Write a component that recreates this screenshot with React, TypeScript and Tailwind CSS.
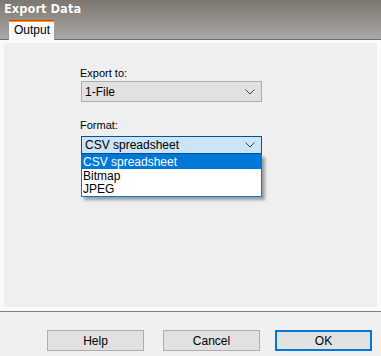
import React from "react";

function Chevron({ color = "#404040" }: { color?: string }) {
  return (
    <svg width="10" height="6" viewBox="0 0 10 6" className="block">
      <path d="M0.5 0.5 L5 5 L9.5 0.5" fill="none" stroke={color} strokeWidth="1" />
    </svg>
  );
}

export default function App() {
  return (
    <div
      className="w-[381px] h-[356px] bg-[#f0f0f0] flex flex-col overflow-hidden"
      style={{ fontFamily: '"Liberation Sans", Arial, sans-serif' }}
    >
      {/* header */}
      <div className="h-[40px] bg-gradient-to-b from-[#7d7770] to-[#aaa8a5] border-b border-[#6e6e6e] flex flex-col relative">
        <div
          className="pl-[4px] pt-[2px] text-[11.5px] font-bold text-white leading-[14px] [text-shadow:0_0_1px_rgba(0,0,0,0.3)]"
          style={{ fontFamily: '"DejaVu Sans", Verdana, sans-serif' }}
        >
          Export Data
        </div>
        <div className="absolute left-[8px] top-[20px] w-[47px] h-[20px] bg-[#f9f9f9] border-x border-[#9a9a9a] flex flex-col">
          <div className="h-[1px] bg-[#e53a00]" />
          <div className="h-[1px] bg-[#ff9a00]" />
          <div className="pl-[5px] pt-[1px] text-[12px] text-[#000] leading-[15px]">Output</div>
        </div>
      </div>
      <div className="bg-[#fafafa] pt-[3px] px-[4px] pb-[4px] flex">
        <div className="w-[373px] h-[264px] bg-[#efefef] relative">
          <div className="absolute left-[76px] top-[24px] text-[11px] text-black leading-[13px]">Export to:</div>
          <div className="absolute left-[77px] top-[38px] w-[181px] h-[21px] bg-[#e1e1e1] border border-[#adadad] flex items-center justify-between pl-[3px] pr-[6px]">
            <span className="text-[12px] text-black">1-File</span>
            <Chevron />
          </div>
          <div className="absolute left-[76px] top-[76px] text-[11px] text-black leading-[13px]">Format:</div>
          <div className="absolute left-[77px] top-[93px] w-[181px] h-[18px] bg-[#cce4f7] border border-[#005499] flex items-center justify-between pl-[3px] pr-[6px]">
            <span className="text-[12px] text-black">CSV spreadsheet</span>
            <Chevron />
          </div>
          <div className="absolute left-[77px] top-[111px] w-[181px] h-[43px] bg-white border border-[#0078d7] shadow-[3px_3px_3px_rgba(0,0,0,0.35)] flex flex-col">
            <div className="h-[14px] bg-[#0078d7] text-white text-[12px] leading-[14px] pl-[1px]">CSV spreadsheet</div>
            <div className="h-[14px] text-black text-[12px] leading-[14px] pl-[1px]">Bitmap</div>
            <div className="h-[13px] text-black text-[12px] leading-[13px] pl-[1px]">JPEG</div>
          </div>
        </div>
      </div>
      <div className="h-[1px] bg-[#808080]" />
      <div className="flex pl-[47px] pt-[18px]">
        <div className="w-[97px] h-[21px] bg-[#e1e1e1] border border-[#adadad] flex items-center justify-center text-[12px] text-black">Help</div>
        <div className="w-[97px] h-[21px] ml-[19px] bg-[#e1e1e1] border border-[#adadad] flex items-center justify-center text-[12px] text-black">Cancel</div>
        <div className="w-[97px] h-[21px] ml-[15px] bg-[#e1e1e1] border-2 border-[#0078d7] flex items-center justify-center text-[12px] text-black">OK</div>
      </div>
    </div>
  );
}
